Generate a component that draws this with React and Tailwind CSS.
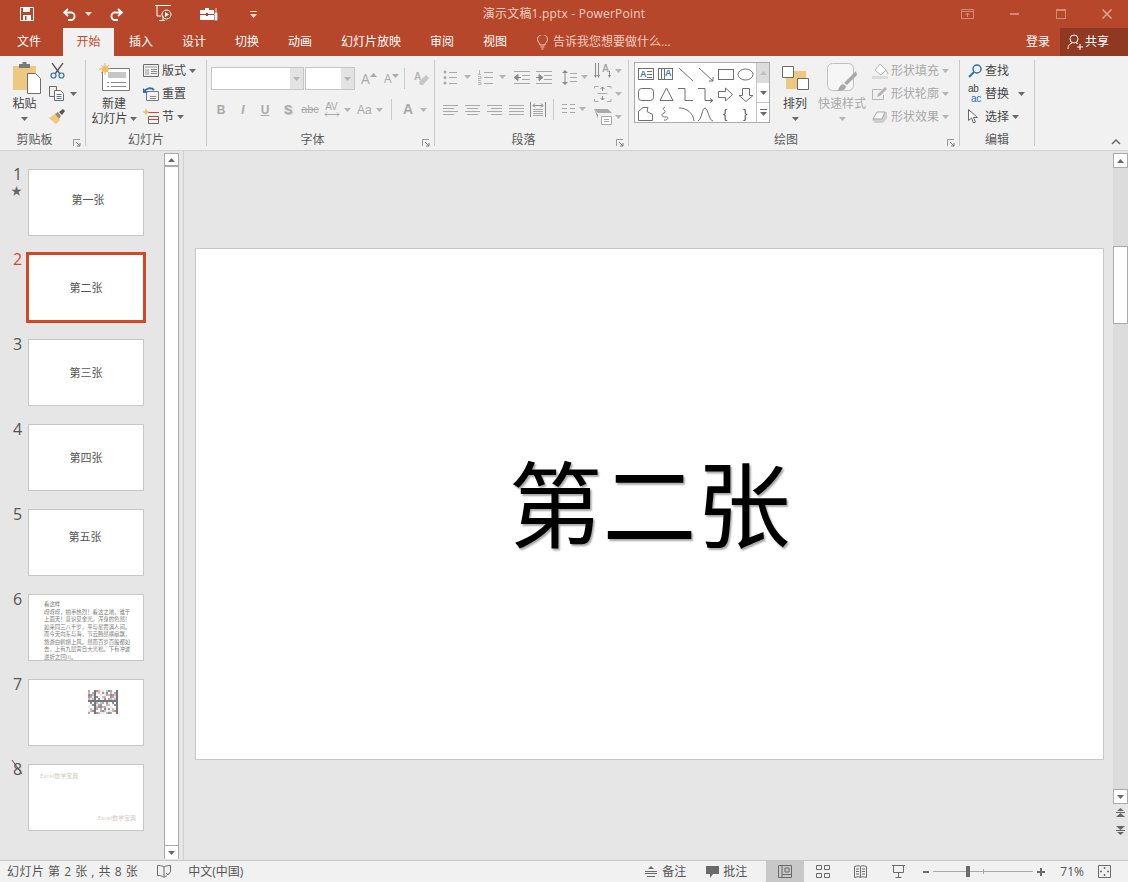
const Caret = ({ className = '', color = '#6a6a6a' }) => (
  <svg width="7" height="4" viewBox="0 0 7 4" className={`shrink-0 ${className}`}>
    <path d="M0 0h7L3.5 4z" fill={color} />
  </svg>
);

const Launcher = () => (
  <svg width="8" height="8" viewBox="0 0 8 8" className="shrink-0">
    <path d="M.5 7V.5H7" fill="none" stroke="#9a9a9a" />
    <path d="M3 3l4 4M7 4v3H4" fill="none" stroke="#7a7a7a" />
  </svg>
);

const Sep = () => <div className="my-[4px] w-px shrink-0 bg-[#c8c8c8]" />;

function Group({ w, label, launcher, children }) {
  return (
    <div className={`flex shrink-0 flex-col ${w}`}>
      <div className="h-[75px]">{children}</div>
      <div className="flex h-[18px] items-center">
        <span className={`flex-1 text-center text-[12px] leading-none text-[#5a5a5a] ${launcher ? 'pr-[4px]' : ''}`}>{label}</span>
        {launcher && <span className="mr-[4px] mt-[5px]"><Launcher /></span>}
      </div>
    </div>
  );
}

function Lines({ rows, w = 16, h = 14, color = '#a9a9a9' }) {
  return (
    <svg width={w} height={h} viewBox={`0 0 ${w} ${h}`} className="shrink-0">
      {rows.map((r, i) => (
        <path key={i} d={`M${r[0]} ${r[2]}.5H${r[1]}`} stroke={color} />
      ))}
    </svg>
  );
}

function MenuRow({ icon, label, disabled, caretClass, iconClass = 'w-[19px]' }) {
  return (
    <div className="flex h-[23px] items-center">
      <span className={`flex shrink-0 items-center ${iconClass}`}>{icon}</span>
      <span className={`text-[12px] leading-none ${disabled ? 'text-[#a8a8a8]' : 'text-[#444444]'}`}>{label}</span>
      {caretClass && <Caret className={caretClass} color={disabled ? '#b5b5b5' : '#6a6a6a'} />}
    </div>
  );
}

function Thumb({ n, active, star, cut, inner = 'items-center justify-center', children }) {
  return (
    <div className="flex shrink-0">
      <div className="relative w-[28px] shrink-0 pl-[13px]">
        <span className={`-mt-[5px] block text-[16px] leading-[20px] ${active ? 'text-[#d24726]' : 'text-[#555555]'}`}>{n}</span>
        {star && <span className="absolute left-[11px] top-[16px] text-[11px] leading-[12px] text-[#666666]">★</span>}
        {cut && (
          <svg width="12" height="16" viewBox="0 0 12 16" className="absolute left-[11px] top-[-5px]">
            <path d="M1 1l10 14" stroke="#555555" />
          </svg>
        )}
      </div>
      <div
        className={`flex h-[67px] w-[116px] overflow-hidden bg-white ${inner} border ${
          active ? 'overflow-visible border-[#d24726] outline-2 outline-[#d24726]' : 'border-[#c6c6c6]'
        }`}
      >
        {children}
      </div>
    </div>
  );
}

const ThumbTitle = ({ children, className = '' }) => (
  <span className={`text-[11px] leading-none text-[#555555] ${className}`}>{children}</span>
);

const mosaicColors = ['#8f98a8', '#ffffff', '#c9a48f', '#ffffff', '#6b7485', '#e8e2dc', '#b96f55', '#ffffff', '#a9b6c9', '#ece7e2', '#4f5666'];

function Mosaic() {
  const cells = [];
  for (let y = 0; y < 12; y++) {
    for (let x = 0; x < 15; x++) {
      cells.push(<rect key={`${x}-${y}`} x={x * 2} y={y * 2} width="2" height="2" fill={mosaicColors[(x * 7 + y * 13 + x * y * 3) % 11]} />);
    }
  }
  return (
    <svg width="30" height="24" viewBox="0 0 30 24" className="ml-[59px] mt-[10px] opacity-80">
      {cells}
    </svg>
  );
}

function ShapeGallery() {
  return (
    <svg width="121" height="59" viewBox="0 0 121 59" className="shrink-0 bg-white" fill="none" stroke="#6f6f6f">
      <rect x="3.500" y="5.500" width="15" height="11" />
      <text x="5" y="14" fontSize="9" fontWeight="700" fill="#4a78b0" stroke="none" fontFamily="Liberation Sans">A</text>
      <path d="M12 8.500h5M12 11.500h5M12 14.500h5" />
      <rect x="23.500" y="5.500" width="14" height="11" />
      <path d="M26.500 6v10M29.500 6v10" />
      <text x="30" y="13" fontSize="9" fontWeight="700" fill="#4a78b0" stroke="none" fontFamily="Liberation Sans">A</text>
      <path d="M44 5l14 13M64 5l14 13M78 18v-4M78 18h-4" />
      <rect x="83.500" y="6.500" width="15" height="10" />
      <ellipse cx="110.500" cy="11.500" rx="7.500" ry="5.500" />
      <rect x="3.500" y="25.500" width="15" height="12" rx="3" />
      <path d="M31.500 25L38 37.500H25z" />
      <path d="M43 25.500h7v12h8M63 25.500h7v12h8M78 37.500l-3-2M78 37.500l-3 2" />
      <path d="M83.500 28.500h7v-3.500l7 6.500-7 6.500v-3.500h-7z" />
      <path d="M107.500 25.500h7v7h3.500l-7 6-7-6h3.500z" />
      <path d="M8 44.500h5l-1 4 5.500 3v6h-14v-9z" />
      <path d="M30 44c-5 2 3 4-1 6s-2 4 2 4 1 4-2 3" />
      <path d="M44 45c8 0 14 5 15 13M63 58c4-2 4-13 7-13s4 13 8 13" />
      <text x="88" y="55" fontSize="13" fill="#555555" stroke="none" fontFamily="Liberation Sans">{'{'}</text>
      <text x="108" y="55" fontSize="13" fill="#555555" stroke="none" fontFamily="Liberation Sans">{'}'}</text>
    </svg>
  );
}

function GalleryScroll() {
  return (
    <div className="flex w-[13px] flex-col border-l border-[#c6c6c6]">
      <div className="flex h-[20px] items-center justify-center bg-[#dcdcdc]"><Caret className="rotate-180" color="#bdbdbd" /></div>
      <div className="flex h-[20px] items-center justify-center border-b border-[#c6c6c6] bg-white"><Caret /></div>
      <div className="flex flex-1 flex-col items-center justify-center gap-[2px] bg-white">
        <span className="h-px w-[7px] bg-[#6a6a6a]" />
        <Caret />
      </div>
    </div>
  );
}

const ListBullets = () => (
  <svg width="14" height="15" viewBox="0 0 14 15" className="shrink-0">
    <g fill="#a9a9a9"><circle cx="2" cy="2" r="1.500" /><circle cx="2" cy="7.500" r="1.500" /><circle cx="2" cy="13" r="1.500" /></g>
    <path d="M6 2.500h8M6 7.500h8M6 13.500h8" stroke="#a9a9a9" />
  </svg>
);

const ListNumbers = () => (
  <svg width="15" height="15" viewBox="0 0 15 15" className="shrink-0">
    <path d="M1.500 0v4M0 4.500h3M0 6.500h3v2H0v2h3M0 12.500h3v2H0" fill="none" stroke="#a9a9a9" strokeWidth=".8" />
    <path d="M6 2.500h9M6 7.500h9M6 13.500h9" stroke="#a9a9a9" />
  </svg>
);

const Indent = ({ flip }) => (
  <svg width="16" height="13" viewBox="0 0 16 13" className="shrink-0">
    <path d="M0 .5h16M8 4.500h8M8 8.500h8M0 12.500h16" stroke="#a9a9a9" />
    {flip ? <path d="M0 6.500h4M3 3.500l4 3-4 3z" fill="#8a8a8a" stroke="#8a8a8a" /> : <path d="M7 6.500H3M4 3.500l-4 3 4 3z" fill="#8a8a8a" stroke="#8a8a8a" />}
  </svg>
);

export default function App() {
  return (
    <div className={`flex h-[882px] w-[1128px] flex-col overflow-hidden bg-[#e6e6e6] font-["Open_Sans","Noto_Sans_CJK_SC",sans-serif] text-[12px]`}>
      {/* Title bar */}
      <div className="grid h-[28px] shrink-0 grid-cols-[1fr_auto_1fr] items-center bg-[#b7472a]">
        <div className="flex items-center pl-[20px]">
          <svg width="14" height="14" viewBox="0 0 14 14" className="shrink-0">
            <path d="M.5.500h13v13H.5z" fill="none" stroke="#fff" />
            <path d="M3 1h7v4H3zM3 8h8v5H3z" fill="#fff" />
            <path d="M5 9h1.500v4H5z" fill="#b7472a" />
          </svg>
          <svg width="15" height="13" viewBox="0 0 15 13" className="ml-[29px] shrink-0">
            <path d="M1 4.500h8a4 4 0 0 1 0 7.500H5M5 1L1 4.500 5 8" fill="none" stroke="#fff" strokeWidth="1.800" />
          </svg>
          <Caret className="ml-[7px]" color="#f3ddd6" />
          <svg width="15" height="13" viewBox="0 0 15 13" className="ml-[16px] shrink-0">
            <path d="M14 4.500H6a4 4 0 0 0 0 7.500h4M10 1l4 3.500L10 8" fill="none" stroke="#fff" strokeWidth="1.800" />
          </svg>
          <svg width="18" height="18" viewBox="0 0 18 18" className="ml-[32px] shrink-0" fill="none" stroke="#fff">
            <path d="M0 .5h16M2 1v10h4M8 11v4M4 15.500h6" />
            <circle cx="11.500" cy="9.500" r="4.500" />
            <path d="M10 7l4 2.500L10 12z" fill="#fff" stroke="none" />
          </svg>
          <svg width="18" height="14" viewBox="0 0 18 14" className="ml-[27px] shrink-0">
            <path d="M0 3h14v4H0zM0 8h14v5H0zM5 1h4v2H5z" fill="#fff" />
            <path d="M6 6h2v3H6z" fill="#b7472a" />
            <path d="M16 1v5M15 6h2v7h-2z" stroke="#fff" fill="#fff" strokeWidth=".8" />
          </svg>
          <svg width="7" height="7" viewBox="0 0 7 7" className="ml-[32px] shrink-0">
            <path d="M0 .5h7" stroke="#f3ddd6" />
            <path d="M0 3h7L3.500 7z" fill="#f3ddd6" />
          </svg>
        </div>
        <span className="text-[12px] leading-none tracking-[0.2px] text-[#efcfc5]">演示文稿1.pptx - PowerPoint</span>
        <div className="flex items-center justify-end pr-[16px]">
          <svg width="13" height="10" viewBox="0 0 13 10" className="shrink-0" fill="none" stroke="#d08c76">
            <path d="M.5.500h12v9H.5zM1 2.500h11" />
            <path d="M6.500 8V4M4.500 6l2-2 2 2" />
          </svg>
          <span className="ml-[36px] h-[2px] w-[9px] bg-[#d08c76]" />
          <span className="ml-[37px] h-[10px] w-[10px] border border-t-2 border-[#d08c76]" />
          <svg width="10" height="10" viewBox="0 0 10 10" className="ml-[36px] shrink-0">
            <path d="M.5.500l9 9M9.500.500l-9 9" stroke="#dea896" strokeWidth="1.500" />
          </svg>
        </div>
      </div>

      {/* Tabs */}
      <div className="flex h-[28px] shrink-0 items-center bg-[#b7472a] text-[12px] text-white">
        <span className="w-[58px] text-center">文件</span>
        <span className="ml-[5px] flex h-full w-[51px] items-center justify-center bg-[#f1f1f1] text-[#c8472a]">开始</span>
        <span className="ml-[15px]">插入</span>
        <span className="ml-[29px]">设计</span>
        <span className="ml-[29px]">切换</span>
        <span className="ml-[29px]">动画</span>
        <span className="ml-[29px]">幻灯片放映</span>
        <span className="ml-[29px]">审阅</span>
        <span className="ml-[29px]">视图</span>
        <svg width="11" height="15" viewBox="0 0 11 15" className="ml-[30px] shrink-0" fill="none" stroke="#f0cfc5">
          <path d="M3 10c0-2-2.500-3-2.500-5.500a5 5 0 0 1 10 0C10.500 7 8 8 8 10zM3.500 12h4M4.500 14h2" />
        </svg>
        <span className="ml-[5px] text-[#efcfc5]">告诉我您想要做什么...</span>
        <span className="ml-auto mr-[10px]">登录</span>
        <div className="flex h-full w-[68px] items-center bg-[#8f3822] pl-[7px]">
          <svg width="16" height="16" viewBox="0 0 16 16" className="shrink-0" fill="none" stroke="#fff">
            <circle cx="7" cy="5" r="4" />
            <path d="M1 15c0-4 2-5 4-6M9 9c1 .3 1.500.6 2 1M10 13h6M13 10v6" />
          </svg>
          <span className="ml-[2px]">共享</span>
        </div>
      </div>

      {/* Ribbon */}
      <div className="flex h-[95px] shrink-0 border-b border-[#d2d2d2] bg-[#f1f1f1]">
        <Group w="w-[85px]" label="剪贴板" launcher>
          <div className="flex pt-[3px]">
            <div className="flex w-[49px] flex-col items-center">
              <div className="flex h-[37px] items-center pl-[4px]">
                <svg width="29" height="32" viewBox="0 0 29 32">
                  <path d="M1 4h23v24H1z" fill="#edc87e" />
                  <path d="M7 2h11v4H7z" fill="#7a7a7a" />
                  <path d="M10.500 0h4v3h-4z" fill="#7a7a7a" />
                  <path d="M15.500 11.500h8l5 5v15h-13z" fill="#fff" stroke="#6f6f6f" />
                </svg>
              </div>
              <span className="text-[12px] leading-[15px] text-[#444444]">粘贴</span>
              <Caret className="mt-[6px]" />
            </div>
            <div className="flex flex-col">
              <div className="flex h-[23px] items-center pl-[1px]">
                <svg width="15" height="16" viewBox="0 0 15 16" fill="none">
                  <path d="M2 0l8 11M13 0L5 11" stroke="#555555" strokeWidth="1.300" />
                  <circle cx="3.500" cy="12.500" r="2.500" stroke="#2f6fb5" strokeWidth="1.200" />
                  <circle cx="11.500" cy="12.500" r="2.500" stroke="#2f6fb5" strokeWidth="1.200" />
                </svg>
              </div>
              <div className="flex h-[23px] items-center">
                <svg width="16" height="15" viewBox="0 0 16 15" fill="none">
                  <path d="M.5.500h7v10h-7z" stroke="#6a6a6a" />
                  <path d="M5.500 4.500h6l3 3v7h-9z" fill="#fff" stroke="#6a6a6a" />
                  <path d="M7.500 8.500h5M7.500 10.500h5M7.500 12.500h5" stroke="#4a78b0" />
                </svg>
                <Caret className="ml-[5px]" />
              </div>
              <div className="flex h-[23px] items-center">
                <svg width="16" height="15" viewBox="0 0 16 15">
                  <path d="M0 9l6-4 5 6-4 4z" fill="#edc87e" />
                  <path d="M6 5l3-2 3 4-2 3z" fill="#a08a6a" />
                  <path d="M10 3l4-3 2 2-3 4z" fill="#555555" />
                </svg>
              </div>
            </div>
          </div>
        </Group>
        <Sep />

        <Group w="w-[120px]" label="幻灯片">
          <div className="flex pt-[3px]">
            <div className="flex w-[56px] flex-col items-center">
              <div className="flex h-[37px] items-center pl-[1px]">
                <svg width="31" height="29" viewBox="0 0 31 29">
                  <path d="M3.500 5.500h27v22h-27z" fill="#fff" stroke="#7a7a7a" />
                  <path d="M9 9h18v6H9z" fill="#c6c6c6" />
                  <path d="M8 19.500h2M12 19.500h15M8 23.500h2M12 23.500h15" stroke="#8a8a8a" />
                  <circle cx="6" cy="6" r="3.500" fill="#f3c77b" />
                  <path d="M6 0v12M0 6h12M2 2l8 8M10 2l-8 8" stroke="#edb95f" />
                </svg>
              </div>
              <span className="text-[12px] leading-[15px] text-[#444444]">新建</span>
              <span className="flex items-center whitespace-nowrap text-[12px] leading-[15px] text-[#444444]">
                幻灯片<Caret className="ml-[2px]" />
              </span>
            </div>
            <div className="ml-[1px] flex flex-col">
              <MenuRow
                label="版式"
                caretClass="ml-[3px]"
                icon={
                  <svg width="16" height="13" viewBox="0 0 16 13" fill="none">
                    <path d="M.5.500h15v12H.5z" stroke="#6a6a6a" />
                    <path d="M2 2h12v2H2zM2 5h4v6H2z" fill="#c6c6c6" />
                    <path d="M8 5.500h6M8 7.500h6M8 9.500h6" stroke="#8a8a8a" />
                  </svg>
                }
              />
              <MenuRow
                label="重置"
                icon={
                  <svg width="16" height="14" viewBox="0 0 16 14" fill="none">
                    <path d="M3.500 4.500h12v9h-12z" stroke="#7a7a7a" />
                    <path d="M7 9.500h6M7 11.500h6" stroke="#8a8a8a" />
                    <path d="M1 5c2-4 7-5 10-2" stroke="#2f6fb5" strokeWidth="2" />
                    <path d="M0 1v5h5z" fill="#2f6fb5" />
                  </svg>
                }
              />
              <MenuRow
                label="节"
                caretClass="ml-[3px]"
                icon={
                  <svg width="16" height="15" viewBox="0 0 16 15" fill="none">
                    <path d="M5.500 7.500h10v7h-10z" stroke="#6a6a6a" />
                    <path d="M5 3.500h11" stroke="#d24726" />
                    <path d="M5 10.500h11" stroke="#d24726" />
                    <circle cx="3" cy="3" r="1.800" fill="#edb95f" />
                    <path d="M3 0v6M0 3h6" stroke="#edb95f" />
                  </svg>
                }
              />
            </div>
          </div>
        </Group>
        <Sep />

        <Group w="w-[227px]" label="字体" launcher>
          <div className="pt-[11px]">
            <div className="flex h-[23px] items-center pl-[4px]">
              <div className="flex h-[23px] w-[93px] border border-[#c6c6c6] bg-white">
                <span className="flex-1" />
                <span className="flex w-[13px] items-center justify-center bg-[#e3e3e3]"><Caret color="#b5b5b5" /></span>
              </div>
              <div className="ml-px flex h-[23px] w-[50px] border border-[#c6c6c6] bg-white">
                <span className="flex-1" />
                <span className="flex w-[13px] items-center justify-center bg-[#e3e3e3]"><Caret color="#b5b5b5" /></span>
              </div>
              <span className="ml-[6px] flex w-[14px] items-start text-[14px] leading-none text-[#a9a9a9]">A<Caret className="mt-[1px] rotate-180" color="#a9a9a9" /></span>
              <span className="ml-[9px] flex w-[14px] items-start text-[12px] leading-none text-[#a9a9a9]">A<Caret className="mt-[1px]" color="#a9a9a9" /></span>
              <span className="ml-[6px] h-[21px] w-px bg-[#c8c8c8]" />
              <svg width="15" height="15" viewBox="0 0 15 15" className="ml-[9px] shrink-0">
                <text x="0" y="9" fontSize="10" fontWeight="700" fill="#b5b5b5" fontFamily="Liberation Sans">A</text>
                <path d="M5 11l7-7 3 3-6 7H6z" fill="#c6c6c6" />
              </svg>
            </div>
            <div className="mt-[8px] flex h-[23px] items-center pl-[3px] font-['Liberation_Sans',sans-serif] text-[#a9a9a9]">
              <span className="w-[22px] text-center text-[12px] font-bold">B</span>
              <span className="w-[22px] text-center text-[12px] italic font-bold">I</span>
              <span className="w-[22px] text-center text-[12px] font-bold underline">U</span>
              <span className="w-[24px] text-center text-[13px] font-bold [text-shadow:1px_1px_1px_#c6c6c6]">S</span>
              <span className="w-[20px] text-center text-[11px] line-through">abc</span>
              <span className="flex w-[23px] flex-col items-center text-[10px] leading-[10px]">
                AV
                <svg width="16" height="5" viewBox="0 0 16 5" fill="none"><path d="M1 2.500h14M3 .5L1 2.500l2 2M13 .5l2 2-2 2" stroke="#a9a9a9" /></svg>
              </span>
              <Caret className="ml-[1px]" color="#b5b5b5" />
              <span className="ml-[6px] w-[15px] text-[12px]">Aa</span>
              <Caret className="ml-[4px]" color="#b5b5b5" />
              <span className="ml-[8px] h-[21px] w-px bg-[#c8c8c8]" />
              <span className="ml-[11px] w-[10px] text-[14px] font-bold">A</span>
              <Caret className="ml-[7px]" color="#b5b5b5" />
            </div>
          </div>
        </Group>
        <Sep />

        <Group w="w-[193px]" label="段落" launcher>
          <div className="flex pt-[6px]">
            <div className="w-[159px] pl-[8px]">
              <div className="flex h-[30px] items-center">
                <ListBullets />
                <Caret className="ml-[7px]" color="#b5b5b5" />
                <span className="ml-[7px]"><ListNumbers /></span>
                <Caret className="ml-[6px]" color="#b5b5b5" />
                <span className="ml-[8px] flex"><Indent /></span>
                <span className="ml-[6px] flex"><Indent flip /></span>
                <svg width="15" height="15" viewBox="0 0 15 15" className="ml-[10px] shrink-0">
                  <path d="M3 2v11" stroke="#8a8a8a" />
                  <path d="M3 0l3 3H0zM3 15l3-3H0z" fill="#8a8a8a" />
                  <path d="M8 3.500h7M8 7.500h7M8 11.500h7" stroke="#a9a9a9" />
                </svg>
                <Caret className="ml-[4px]" color="#b5b5b5" />
              </div>
              <div className="mt-[2px] flex h-[30px] items-center">
                <Lines w={15} h={11} rows={[[0, 15, 1], [0, 11, 4], [0, 15, 7], [0, 11, 10]]} />
                <span className="ml-[7px] flex"><Lines w={15} h={11} rows={[[0, 15, 1], [2, 13, 4], [0, 15, 7], [2, 13, 10]]} /></span>
                <span className="ml-[7px] flex"><Lines w={15} h={11} rows={[[0, 15, 1], [4, 15, 4], [0, 15, 7], [4, 15, 10]]} /></span>
                <span className="ml-[7px] flex"><Lines w={15} h={11} rows={[[0, 15, 1], [0, 15, 4], [0, 15, 7], [0, 15, 10]]} /></span>
                <svg width="16" height="15" viewBox="0 0 16 15" className="ml-[6px] shrink-0">
                  <path d="M.5 0v15M15.500 0v15" stroke="#8a8a8a" />
                  <path d="M3 3.500h10M5 1.500L3 3.500l2 2M11 1.500l2 2-2 2" fill="none" stroke="#8a8a8a" />
                  <path d="M3 7.500h10M3 9.500h10M3 11.500h10M3 13.500h10" stroke="#a9a9a9" />
                </svg>
                <span className="ml-[7px] h-[21px] w-px bg-[#c8c8c8]" />
                <span className="ml-[8px] flex"><Lines w={13} h={10} rows={[[0, 5, 0], [8, 13, 0], [0, 5, 4], [8, 13, 4], [0, 5, 8], [8, 13, 8]]} /></span>
                <Caret className="ml-[4px]" color="#b5b5b5" />
              </div>
            </div>
            <div className="-mt-[3px] flex flex-col">
              <div className="flex h-[23px] items-center">
                <svg width="18" height="16" viewBox="0 0 18 16">
                  <path d="M1.500 0v13M4.500 0v13M15.500 8v5" stroke="#8a8a8a" />
                  <path d="M0 12h3l-1.500 3zM3 12h3l-1.500 3zM14 12h3l-1.500 3z" fill="#8a8a8a" />
                  <text x="8" y="9" fontSize="10" fontWeight="700" fill="#a9a9a9" fontFamily="Liberation Sans">A</text>
                </svg>
                <Caret className="ml-[3px]" color="#b5b5b5" />
              </div>
              <div className="flex h-[23px] items-center">
                <svg width="18" height="16" viewBox="0 0 18 16" fill="none">
                  <path d="M.5 2.500v-2h4M13 .5h4v2M.5 13v2.500h4M13 15.500h4V13" stroke="#a9a9a9" />
                  <path d="M3.500 7.500h10" stroke="#a9a9a9" />
                  <path d="M8.500 1v4M6.500 3l2-2 2 2M8.500 14v-4M6.500 12l2 2 2-2" stroke="#8a8a8a" />
                </svg>
                <Caret className="ml-[3px]" color="#b5b5b5" />
              </div>
              <div className="flex h-[23px] items-center">
                <svg width="18" height="16" viewBox="0 0 18 16">
                  <path d="M0 0h14l4 4H4z" fill="#a9a9a9" />
                  <path d="M0 0l4 6v3z" fill="#8a8a8a" />
                  <path d="M7.500 7.500h10v8h-10z" fill="#fff" stroke="#a9a9a9" />
                  <path d="M10 10.500h5M10 12.500h5" stroke="#a9a9a9" />
                </svg>
                <Caret className="ml-[3px]" color="#b5b5b5" />
              </div>
            </div>
          </div>
        </Group>
        <Sep />

        <Group w="w-[330px]" label="绘图" launcher>
          <div className="flex pt-[6px]">
            <div className="ml-[5px] flex h-[61px] shrink-0 border border-[#ababab]">
              <ShapeGallery />
              <GalleryScroll />
            </div>
            <div className="-mt-[3px] ml-[2px] flex w-[46px] flex-col items-center">
              <div className="flex h-[37px] items-center">
                <svg width="27" height="24" viewBox="0 0 27 24">
                  <path d="M4 5h20v18H4z" fill="#edc87e" />
                  <path d="M.5.500h11v11H.5z" fill="#fff" stroke="#6a6a6a" />
                  <path d="M15.500 12.500h11v11h-11z" fill="#fff" stroke="#6a6a6a" />
                </svg>
              </div>
              <span className="text-[12px] leading-[15px] text-[#444444]">排列</span>
              <Caret className="mt-[6px]" />
            </div>
            <div className="-mt-[3px] flex w-[48px] flex-col items-center">
              <div className="flex h-[37px] items-center">
                <svg width="30" height="29" viewBox="0 0 30 29">
                  <rect x=".5" y=".5" width="26" height="27" rx="5" fill="#f6f6f6" stroke="#c0c0c0" />
                  <path d="M29 8L17 20l3 2 10-10z" fill="#a9a9a9" />
                  <path d="M10 28c2-1 2-6 6-7l3 2c0 4-4 5-9 5z" fill="#a9a9a9" />
                </svg>
              </div>
              <span className="whitespace-nowrap text-[12px] leading-[15px] text-[#a8a8a8]">快速样式</span>
              <Caret className="mt-[6px]" color="#b5b5b5" />
            </div>
            <div className="-mt-[3px] ml-[6px] flex flex-col">
              <MenuRow
                disabled
                label="形状填充"
                caretClass="ml-[3px]"
                icon={
                  <svg width="17" height="16" viewBox="0 0 17 16">
                    <path d="M3 7l5-6 6 6-5 5z" fill="#fff" stroke="#b5b5b5" />
                    <path d="M14 7c1 2 2 3 2 4" stroke="#b5b5b5" />
                    <path d="M0 13h16v3H0z" fill="#dcdcdc" />
                  </svg>
                }
              />
              <MenuRow
                disabled
                label="形状轮廓"
                caretClass="ml-[3px]"
                icon={
                  <svg width="16" height="15" viewBox="0 0 16 15" fill="none">
                    <path d="M.5 3.500h9M.5 3.500v10h11V9" stroke="#b5b5b5" />
                    <path d="M5 11l1-3 7-7 2 2-7 7z" fill="#b5b5b5" />
                  </svg>
                }
              />
              <MenuRow
                disabled
                label="形状效果"
                caretClass="ml-[3px]"
                icon={
                  <svg width="16" height="14" viewBox="0 0 16 14">
                    <path d="M3 13l-3-3 5-8h10v6l-4 5z" fill="#cfcfcf" />
                    <path d="M1 9l4-7h8l-3 7z" fill="#f6f6f6" stroke="#a9a9a9" />
                  </svg>
                }
              />
            </div>
          </div>
        </Group>
        <Sep />

        <Group w="w-[74px]" label="编辑">
          <div className="pl-[8px] pt-[3px]">
            <MenuRow
              label="查找"
              iconClass="w-[17px]"
              icon={
                <svg width="14" height="14" viewBox="0 0 14 14" fill="none">
                  <circle cx="9" cy="5" r="4" stroke="#2f6fb5" strokeWidth="1.500" />
                  <path d="M6 8l-5 5" stroke="#2f6fb5" strokeWidth="2" />
                </svg>
              }
            />
            <MenuRow
              label="替换"
              caretClass="ml-[9px]"
              iconClass="w-[17px]"
              icon={
                <span className="flex flex-col font-['Liberation_Sans',sans-serif] text-[10px] leading-[10px] tracking-tight">
                  <span className="text-[#444444]">ab</span>
                  <span className="pl-[3px] text-[#2f6fb5]">ac</span>
                </span>
              }
            />
            <MenuRow
              label="选择"
              caretClass="ml-[3px]"
              iconClass="w-[17px]"
              icon={
                <svg width="10" height="15" viewBox="0 0 10 15" fill="none">
                  <path d="M.5.500v11l3-2.500 2 5 2-1-2-4.500h4z" fill="#fff" stroke="#6a6a6a" />
                </svg>
              }
            />
          </div>
        </Group>
        <Sep />

        <div className="flex flex-1 items-end justify-end pb-[5px] pr-[7px]">
          <svg width="10" height="6" viewBox="0 0 10 6"><path d="M1 5l4-4 4 4" fill="none" stroke="#6a6a6a" strokeWidth="1.500" /></svg>
        </div>
      </div>

      {/* Work area */}
      <div className="flex min-h-0 flex-1">
        {/* Thumbnails */}
        <div className="flex w-[164px] shrink-0 flex-col gap-[18px] pt-[18px]">
          <Thumb n="1" star><ThumbTitle className="mb-[7px] ml-[4px]">第一张</ThumbTitle></Thumb>
          <Thumb n="2" active><ThumbTitle>第二张</ThumbTitle></Thumb>
          <Thumb n="3"><ThumbTitle>第三张</ThumbTitle></Thumb>
          <Thumb n="4"><ThumbTitle>第四张</ThumbTitle></Thumb>
          <Thumb n="5"><ThumbTitle className="mb-[13px] mr-[2px]">第五张</ThumbTitle></Thumb>
          <Thumb n="6" inner="flex-col pl-[15px] pr-[8px] pt-[6px]">
            <p className="text-[5.400px] leading-[7.500px] text-[#777777]">
              看这样<br />
              呀呀呀，拍手热烈！看这之地，谁于上面天！意识见金光，浑身的色然！如来同三八千岁，平与星霞满人间。而今天向东与海，节云腾然横扇飘，悠游白鹤翅上风。然而百岁百般都如去，上有九层霄日大光松。下有冲波逆折之回川。
            </p>
          </Thumb>
          <Thumb n="7" inner="items-start justify-start"><Mosaic /></Thumb>
          <Thumb n="8" cut inner="flex-col justify-between pb-[8px] pl-[11px] pr-[7px] pt-[7px]">
            <span className="text-[6px] leading-[8px] text-[#d5cdc6]">Excel数学宝典</span>
            <span className="self-end text-[6px] leading-[8px] text-[#d5cdc6]">Excel数学宝典</span>
          </Thumb>
        </div>

        {/* Thumbnail scrollbar */}
        <div className="mb-[1px] mt-[2px] flex w-[15px] shrink-0 flex-col border-x border-t border-[#ababab] bg-white">
          <div className="flex h-[13px] items-center justify-center border-b-2 border-[#ababab]"><Caret className="rotate-180" /></div>
          <div className="flex-1" />
          <div className="flex h-[14px] items-center justify-center border-t border-[#ababab]"><Caret /></div>
        </div>
        <div className="ml-[4px] w-px shrink-0 bg-[#d0d0d0]" />

        {/* Slide */}
        <div className="flex min-w-0 flex-1 pl-[11px] pt-[97px]">
          <div className="flex h-[512px] w-[909px] shrink-0 items-center justify-center border border-[#c6c6c6] bg-white">
            <span className="mt-[2px] text-[94px] leading-none text-black [text-shadow:1.500px_1.500px_2px_rgba(0,0,0,0.35)]">第二张</span>
          </div>
        </div>

        {/* Main scrollbar */}
        <div className="flex w-[15px] shrink-0 flex-col items-stretch pt-[2px]">
          <div className="flex h-[15px] items-center justify-center border border-[#ababab] bg-white"><Caret className="rotate-180" /></div>
          <div className="h-[621px] bg-[#dcdcdc] pt-[78px]">
            <div className="h-[78px] border border-[#ababab] bg-white" />
          </div>
          <div className="flex h-[15px] items-center justify-center border border-[#ababab] bg-white"><Caret /></div>
          <div className="mt-[4px] flex flex-col items-center">
            <svg width="9" height="9" viewBox="0 0 9 9">
              <path d="M4.500 0L8 3H1z" fill="#666666" />
              <path d="M0 4h9v1H0z" fill="#666666" />
              <path d="M4.500 5L9 9H0z" fill="#666666" />
            </svg>
            <svg width="9" height="9" viewBox="0 0 9 9" className="mt-[9px]">
              <path d="M0 0h9L4.500 4z" fill="#666666" />
              <path d="M0 4h9v1H0z" fill="#666666" />
              <path d="M1 6h7L4.500 9z" fill="#666666" />
            </svg>
          </div>
        </div>
      </div>

      {/* Status bar */}
      <div className="flex h-[22px] shrink-0 items-center border-t border-[#c6c6c6] bg-[#f1f1f1] text-[12px] text-[#555555]">
        <span className="ml-[7px] tracking-[0.5px]">幻灯片 第 2 张 , 共 8 张</span>
        <svg width="14" height="13" viewBox="0 0 14 13" className="ml-[19px] shrink-0" fill="none" stroke="#6a6a6a">
          <path d="M7 2C5 .5 2 .5.5.5v10c2 0 4.500 0 6.500 2 1-1 2-1.500 3-1.700M7 2c1.500-1 4-1.500 6.500-1.500V6M7 2v10" />
          <path d="M9 8l2 2 3-4" />
        </svg>
        <span className="ml-[17px]">中文(中国)</span>
        <div className="ml-auto flex h-full items-center">
          <svg width="12" height="11" viewBox="0 0 12 11" className="shrink-0">
            <path d="M6 0l3 3H3z" fill="#6a6a6a" />
            <path d="M0 5.500h12M0 7.500h12M2 10.500h8" stroke="#6a6a6a" />
          </svg>
          <span className="ml-[5px]">备注</span>
          <svg width="13" height="12" viewBox="0 0 13 12" className="ml-[20px] shrink-0">
            <path d="M0 0h13v8H7l-3 4V8H0z" fill="#6a6a6a" />
          </svg>
          <span className="ml-[4px]">批注</span>
          <div className="ml-[19px] flex h-full w-[38px] items-center justify-center bg-[#c8c8c8]">
            <svg width="14" height="13" viewBox="0 0 14 13" fill="none" stroke="#6a6a6a">
              <path d="M.5.500h13v12H.5zM4 .5v12M7 3h4v4H7zM4 9.500h10" />
            </svg>
          </div>
          <svg width="14" height="13" viewBox="0 0 14 13" className="ml-[12px] shrink-0" fill="none" stroke="#6a6a6a">
            <path d="M.5.500h5v4h-5zM8.500.500h5v4h-5zM.5 8.500h5v4h-5zM8.500 8.500h5v4h-5z" />
          </svg>
          <svg width="13" height="13" viewBox="0 0 13 13" className="ml-[24px] shrink-0" fill="none" stroke="#6a6a6a">
            <path d="M.5 1.500c3-1 4.500-1 6 0 1.500-1 3-1 6 0v11c-3-1-4.500-1-6 0-1.500-1-3-1-6 0zM6.500 1.500v11M2 4h3M2 6.500h3M2 9h3M8 4h3M8 6.500h3M8 9h3" />
          </svg>
          <svg width="13" height="13" viewBox="0 0 13 13" className="ml-[25px] shrink-0" fill="none" stroke="#6a6a6a">
            <path d="M0 .5h13M1.500 1v6.500h10V1M6.500 8v4M3.500 12.500h6" />
          </svg>
          <span className="ml-[18px] h-[2px] w-[6px] bg-[#6a6a6a]" />
          <div className="relative ml-[4px] flex h-[10px] w-[100px] items-center">
            <span className="h-px w-full bg-[#a9a9a9]" />
            <span className="absolute left-[33px] h-[11px] w-[4px] bg-[#6a6a6a]" />
            <span className="absolute left-[50px] h-[5px] w-px bg-[#a9a9a9]" />
          </div>
          <svg width="8" height="8" viewBox="0 0 8 8" className="ml-[4px] shrink-0"><path d="M4 0v8M0 4h8" stroke="#6a6a6a" strokeWidth="2" /></svg>
          <span className="ml-[15px]">71%</span>
          <svg width="13" height="13" viewBox="0 0 13 13" className="ml-[14px] mr-[17px] shrink-0" fill="none" stroke="#6a6a6a">
            <path d="M.5.500h12v12H.5z" />
            <path d="M6.500 2v2M5.500 3h2M6.500 9v2M5.500 10h2M2 6.500h2M3 5.500v2M9 6.500h2M10 5.500v2" />
          </svg>
        </div>
      </div>
    </div>
  );
}
